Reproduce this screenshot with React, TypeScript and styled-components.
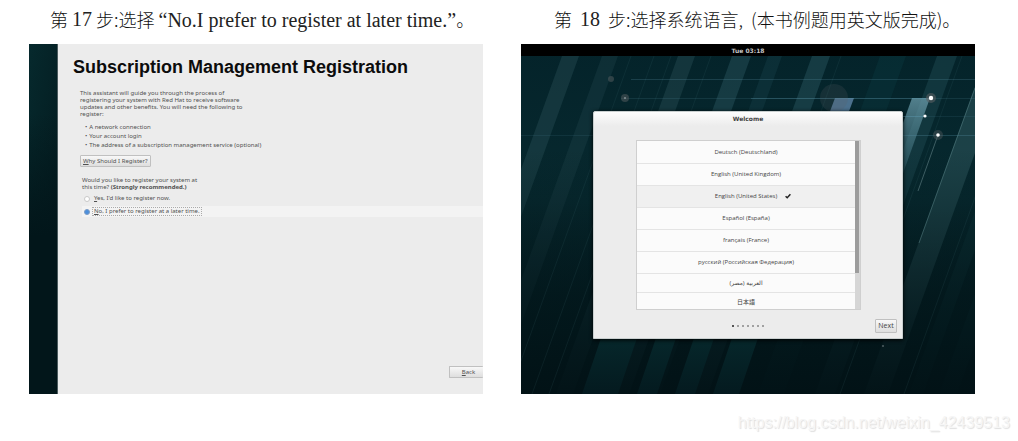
import React from "react";
import styled, { createGlobalStyle } from "styled-components";

const Global = createGlobalStyle`
  * { box-sizing: border-box; }
  body { margin: 0; background: #fff; }
  button, input { font: inherit; color: inherit; margin: 0; }
`;

const Page = styled.main`
  display: flex;
  flex-direction: column;
  padding: 0 8px 0 29px;
  font-family: "Noto Sans", "Noto Sans CJK SC", sans-serif;
`;
const Steps = styled.div`
  display: grid;
  grid-template-columns: 1fr 1fr;
  column-gap: 38px;
  padding-right: 35px;
`;
const Step = styled.section`
  display: flex;
  flex-direction: column;
  min-width: 0;
`;
const Caption = styled.h2<{ $indent: number; $gap: number }>`
  display: flex;
  gap: ${(p) => p.$gap}px;
  margin: 0;
  height: 44px;
  padding: 4px 0 0 ${(p) => p.$indent}px;
  font: 300 18px/30px "Noto Sans CJK SC", sans-serif;
  color: #111;
  white-space: nowrap;
`;
const Latin = styled.span`
  font: 400 20px/30px "Liberation Serif", serif;
  color: #222;
`;
const Screen = styled.div`
  position: relative;
  display: flex;
  min-height: 350px;
  overflow: hidden;
  background: #03181d;
`;
const Backdrop = styled.svg`
  position: absolute;
  inset: 0;
  width: 100%;
  height: 100%;
`;

const Sidebar = styled.div`
  flex: 0 0 29px;
  border-right: 1px solid #4b5b5e;
  background:
    linear-gradient(transparent 20%, #02161a 55%),
    linear-gradient(100deg, #06292d, #021418);
`;
const Assistant = styled.div`
  flex: 1;
  display: flex;
  flex-direction: column;
  background: #ececec;
  color: #505050;
  font-size: 6px;
  line-height: 7px;
`;
const Title = styled.h1`
  margin: 0;
  padding: 12px 0 0 15px;
  font: 700 18px/22px "Liberation Sans", sans-serif;
  color: #0c0c0c;
  white-space: nowrap;
`;
const Intro = styled.p`
  margin: 12px 0 0 22px;
  white-space: nowrap;
`;
const Needs = styled.ul`
  margin: 5px 0 0 22px;
  padding: 0 0 0 5px;
  list-style: none;
  line-height: 9px;
  li { display: flex; gap: 2px; }
  li::before { content: "•"; }
`;
const SmallButton = styled.button`
  border: 1px solid #c0c0c0;
  border-radius: 1px;
  background: linear-gradient(#f8f8f8, #dedede);
  padding: 0 2px;
  height: 12px;
  line-height: 9px;
  white-space: nowrap;
`;
const WhyButton = styled(SmallButton)`
  align-self: flex-start;
  margin: 5px 0 0 22px;
`;
const Choice = styled.fieldset`
  margin: 10px 0 0 24px;
  padding: 0;
  border: 0;
  min-width: 0;
`;
const Legend = styled.legend`
  padding: 0;
  white-space: nowrap;
`;
const Option = styled.label<{ $active?: boolean }>`
  display: flex;
  align-items: center;
  gap: 3px;
  height: 11px;
  margin-top: 2px;
  padding-left: 2px;
  background: ${(p) => (p.$active ? "#f3f3f3" : "none")};
`;
const Radio = styled.input`
  appearance: none;
  width: 6px;
  height: 6px;
  border: 1px solid #c9c9c9;
  border-radius: 50%;
  background: #fff;
  &:checked { border-color: #7d9cc4; background: #4b8fdc; }
`;
const OptionText = styled.span<{ $focus?: boolean }>`
  padding: 0 1px;
  outline: ${(p) => (p.$focus ? "1px dotted #aaa" : "none")};
`;
const BackButton = styled(SmallButton)`
  align-self: flex-end;
  width: 34px;
  margin: auto 0 16px;
  padding-left: 6px;
  border-right: 0;
`;

const Desktop = styled.div`
  position: relative;
  flex: 1;
  display: flex;
  flex-direction: column;
`;
const TopBar = styled.div`
  height: 12px;
  background: #000;
  color: #c4c4c4;
  text-align: center;
  font: 700 6px/13px "DejaVu Sans", sans-serif;
`;
const Dialog = styled.div`
  margin: 55px 72px 0;
  height: 228px;
  display: flex;
  flex-direction: column;
  border: 1px solid #c9cfcf;
  border-radius: 2px 2px 0 0;
  background: #ececec;
  box-shadow: 0 1px 4px #000;
  color: #444;
  font: 400 6px/8px "Open Sans", "DejaVu Sans", "Noto Sans CJK JP", sans-serif;
`;
const DialogTitle = styled.h3`
  margin: 0;
  height: 14px;
  border-radius: 2px 2px 0 0;
  background: linear-gradient(#fdfdfd, #ececec);
  text-align: center;
  color: #444;
  font: 700 6px/13px "DejaVu Sans", sans-serif;
`;
const ListFrame = styled.div`
  display: flex;
  margin: 14px 41px 0 42px;
  height: 170px;
  border: 1px solid #cfcfcf;
`;
const Languages = styled.ul`
  flex: 1;
  margin: 0;
  padding: 0;
  list-style: none;
  background: #fbfbfb;
`;
const Language = styled.li<{ $selected?: boolean; $short?: boolean }>`
  position: relative;
  display: flex;
  align-items: center;
  justify-content: center;
  height: ${(p) => (p.$short ? 19 : 22)}px;
  padding-bottom: 1px;
  background: ${(p) => (p.$selected ? "#f0f0f0" : "none")};
  & + & { border-top: 1px solid #e4e4e4; }
`;
const Tick = styled.svg`
  position: absolute;
  left: calc(50% + 39px);
  width: 6px;
  height: 6px;
`;
const Track = styled.div`
  width: 5px;
  background: #d6d6d6;
`;
const Thumb = styled.div`
  width: 4px;
  height: 132px;
  background: #9c9c9c;
`;
const Footer = styled.div`
  display: grid;
  grid-template-columns: 1fr auto 1fr;
  align-items: center;
  flex: 1;
  padding: 3px 5px 0;
`;
const Dots = styled.div`
  grid-column: 2;
  display: flex;
  align-items: center;
  gap: 3px;
`;
const Dot = styled.i<{ $on: boolean }>`
  width: 2px;
  height: 2px;
  border-radius: 1px;
  background: ${(p) => (p.$on ? "#222" : "#888")};
`;
const NextButton = styled(SmallButton)`
  justify-self: end;
  width: 22px;
  height: 14px;
  font-size: 7px;
  padding: 0;
`;
const Watermark = styled.p`
  margin: 17px 0 0;
  text-align: right;
  font: 400 16px/24px "Liberation Sans", sans-serif;
  color: #f6f6f6;
  text-shadow: 1px 1px 1px #dedede;
`;

const languages = [
  "Deutsch (Deutschland)",
  "English (United Kingdom)",
  "English (United States)",
  "Español (España)",
  "français (France)",
  "русский (Российская Федерация)",
  "العربية (مصر)",
  "日本語",
];

/* Slanted bands of the wallpaper: left edge at the top bar, width, colour, opacity. */
const bands: [number, number, string, number][] = [
  [41, 17, "#2a5058", 0.4],
  [81, 16, "#2a5058", 0.25],
  [157, 17, "#2a5058", 0.4],
  [211, 19, "#2f5d66", 0.4],
  [247, 14, "#1f4a52", 0.3],
  [291, 18, "#2f6068", 0.4],
  [359, 26, "#0d4045", 0.3],
  [416, 20, "#1d474f", 0.5],
  [465, 24, "#315c62", 0.5],
  [510, 14, "#123c42", 0.4],
  [540, 18, "#123c42", 0.35],
];
const lowerBands: [number, number][] = [[80, 36], [135, 20], [173, 20], [211, 26]];
const hairlines = [110, 133, 150, 190, 320, 441, 505];

function Wallpaper() {
  return (
    <Backdrop viewBox="0 0 454 350" preserveAspectRatio="none" aria-hidden="true">
      <defs>
        <linearGradient id="base" x1="0" y1="0" x2="0" y2="1">
          <stop offset="0" stopColor="#04232a" />
          <stop offset="0.45" stopColor="#07292f" />
          <stop offset="0.8" stopColor="#031b20" />
          <stop offset="1" stopColor="#021216" />
        </linearGradient>
        <linearGradient id="fade" x1="0" y1="0" x2="0" y2="1">
          <stop offset="0.3" stopColor="#021519" stopOpacity="0" />
          <stop offset="0.82" stopColor="#021519" stopOpacity="0.8" />
          <stop offset="1" stopColor="#021216" stopOpacity="0.95" />
        </linearGradient>
        <linearGradient id="beam" x1="0" y1="0" x2="0" y2="1">
          <stop offset="0" stopColor="#6b9dac" stopOpacity="0.75" />
          <stop offset="1" stopColor="#3f7480" stopOpacity="0" />
        </linearGradient>
        <linearGradient id="low" x1="0" y1="0" x2="0" y2="1">
          <stop offset="0" stopColor="#06272b" />
          <stop offset="1" stopColor="#041a1f" />
        </linearGradient>
      </defs>
      <rect width="454" height="350" fill="url(#base)" />
      {bands.map(([x, w, fill, o]) => (
        <path key={x} d={`M${x} 12h${w}l-122 338h${-w}z`} fill={fill} opacity={o} />
      ))}
      <rect width="454" height="350" fill="url(#fade)" />
      {hairlines.map((x) => (
        <path key={x} d={`M${x} 12l-122 338`} stroke="#4d7f86" strokeWidth="0.6" opacity="0.2" />
      ))}
      {lowerBands.map(([x, w]) => (
        <path key={x} d={`M${x} 294h${w}l-19 56h${-w}z`} fill="url(#low)" />
      ))}
      <path d="M391 54h18l-43 120h-18z" fill="url(#beam)" />
      <path d="M314 54h19l-6 16h-19z" fill="#6389ae" opacity="0.75" />
      <path d="M454 44l-56 155" stroke="#6b9599" strokeWidth="0.8" opacity="0.5" />
      <path d="M417 91l-20 56" stroke="#8fb0b4" strokeWidth="0.8" opacity="0.5" />
      <g stroke="#5c97ac" strokeWidth="0.8">
        <path d="M110 35.500H454" opacity="0.3" />
        <path d="M230 54.500H410" opacity="0.5" />
        <path d="M100 54.500H230M410 54.500H454" opacity="0.2" />
        <path d="M380 72.500H404" opacity="0.6" />
        <path d="M404 72.500H454M0 91.500H72" opacity="0.15" />
        <path d="M380 91.500H454" opacity="0.35" />
      </g>
      <g fill="#5a5f62">
        <circle cx="90" cy="35" r="3" opacity="0.5" />
        <circle cx="104" cy="54" r="4" opacity="0.5" />
        <circle cx="313" cy="54" r="14" opacity="0.2" />
        <circle cx="410" cy="54" r="5" opacity="0.6" />
        <circle cx="417" cy="91" r="5" opacity="0.4" />
      </g>
      <g fill="#fff">
        <circle cx="410" cy="54" r="2.200" />
        <circle cx="404" cy="72" r="1.600" />
        <circle cx="417" cy="91" r="1.800" />
        <circle cx="104" cy="54" r="1" opacity="0.4" />
        <circle cx="362" cy="302" r="1" opacity="0.3" />
      </g>
    </Backdrop>
  );
}

export default function App() {
  return (
    <>
      <Global />
      <Page>
        <Steps>
          <Step>
            <Caption $indent={21} $gap={4}>
              <span>第</span>
              <Latin>17</Latin>
              <span>步:选择</span>
              <span><Latin>“No.I prefer to register at later time.”</Latin>。</span>
            </Caption>
            <Screen>
              <Sidebar />
              <Assistant>
                <Title>Subscription Management Registration</Title>
                <Intro>
                  This assistant will guide you through the process of<br />
                  registering your system with Red Hat to receive software<br />
                  updates and other benefits. You will need the following to<br />
                  register:
                </Intro>
                <Needs>
                  <li>A network connection</li>
                  <li>Your account login</li>
                  <li>The address of a subscription management service (optional)</li>
                </Needs>
                <WhyButton type="button"><u>W</u>hy Should I Register?</WhyButton>
                <Choice>
                  <Legend>
                    Would you like to register your system at<br />
                    this time? <b>(Strongly recommended.)</b>
                  </Legend>
                  <Option>
                    <Radio type="radio" name="register" />
                    <OptionText><u>Y</u>es, I'd like to register now.</OptionText>
                  </Option>
                  <Option $active>
                    <Radio type="radio" name="register" defaultChecked />
                    <OptionText $focus><u>N</u>o, I prefer to register at a later time.</OptionText>
                  </Option>
                </Choice>
                <BackButton type="button"><u>B</u>ack</BackButton>
              </Assistant>
            </Screen>
          </Step>
          <Step>
            <Caption $indent={33} $gap={8}>
              <span>第</span>
              <Latin>18</Latin>
              <span>步:选择系统语言,</span>
              <span>(本书例题用英文版完成)。</span>
            </Caption>
            <Screen>
              <Wallpaper />
              <Desktop>
                <TopBar>Tue 03:18</TopBar>
                <Dialog>
                  <DialogTitle>Welcome</DialogTitle>
                  <ListFrame>
                    <Languages>
                      {languages.map((name, i) => (
                        <Language key={name} $selected={i === 2} $short={i > 5}>
                          {name}
                          {i === 2 && (
                            <Tick viewBox="0 0 6 6" aria-hidden="true">
                              <path d="M0.600 3.200L2.200 4.700L5.400 1.200" fill="none" stroke="#222" strokeWidth="1.500" />
                            </Tick>
                          )}
                        </Language>
                      ))}
                    </Languages>
                    <Track><Thumb /></Track>
                  </ListFrame>
                  <Footer>
                    <Dots>
                      {languages.slice(1).map((name, i) => <Dot key={name} $on={i === 0} />)}
                    </Dots>
                    <NextButton type="button">Next</NextButton>
                  </Footer>
                </Dialog>
              </Desktop>
            </Screen>
          </Step>
        </Steps>
        <Watermark>https://blog.csdn.net/weixin_42439513</Watermark>
      </Page>
    </>
  );
}
